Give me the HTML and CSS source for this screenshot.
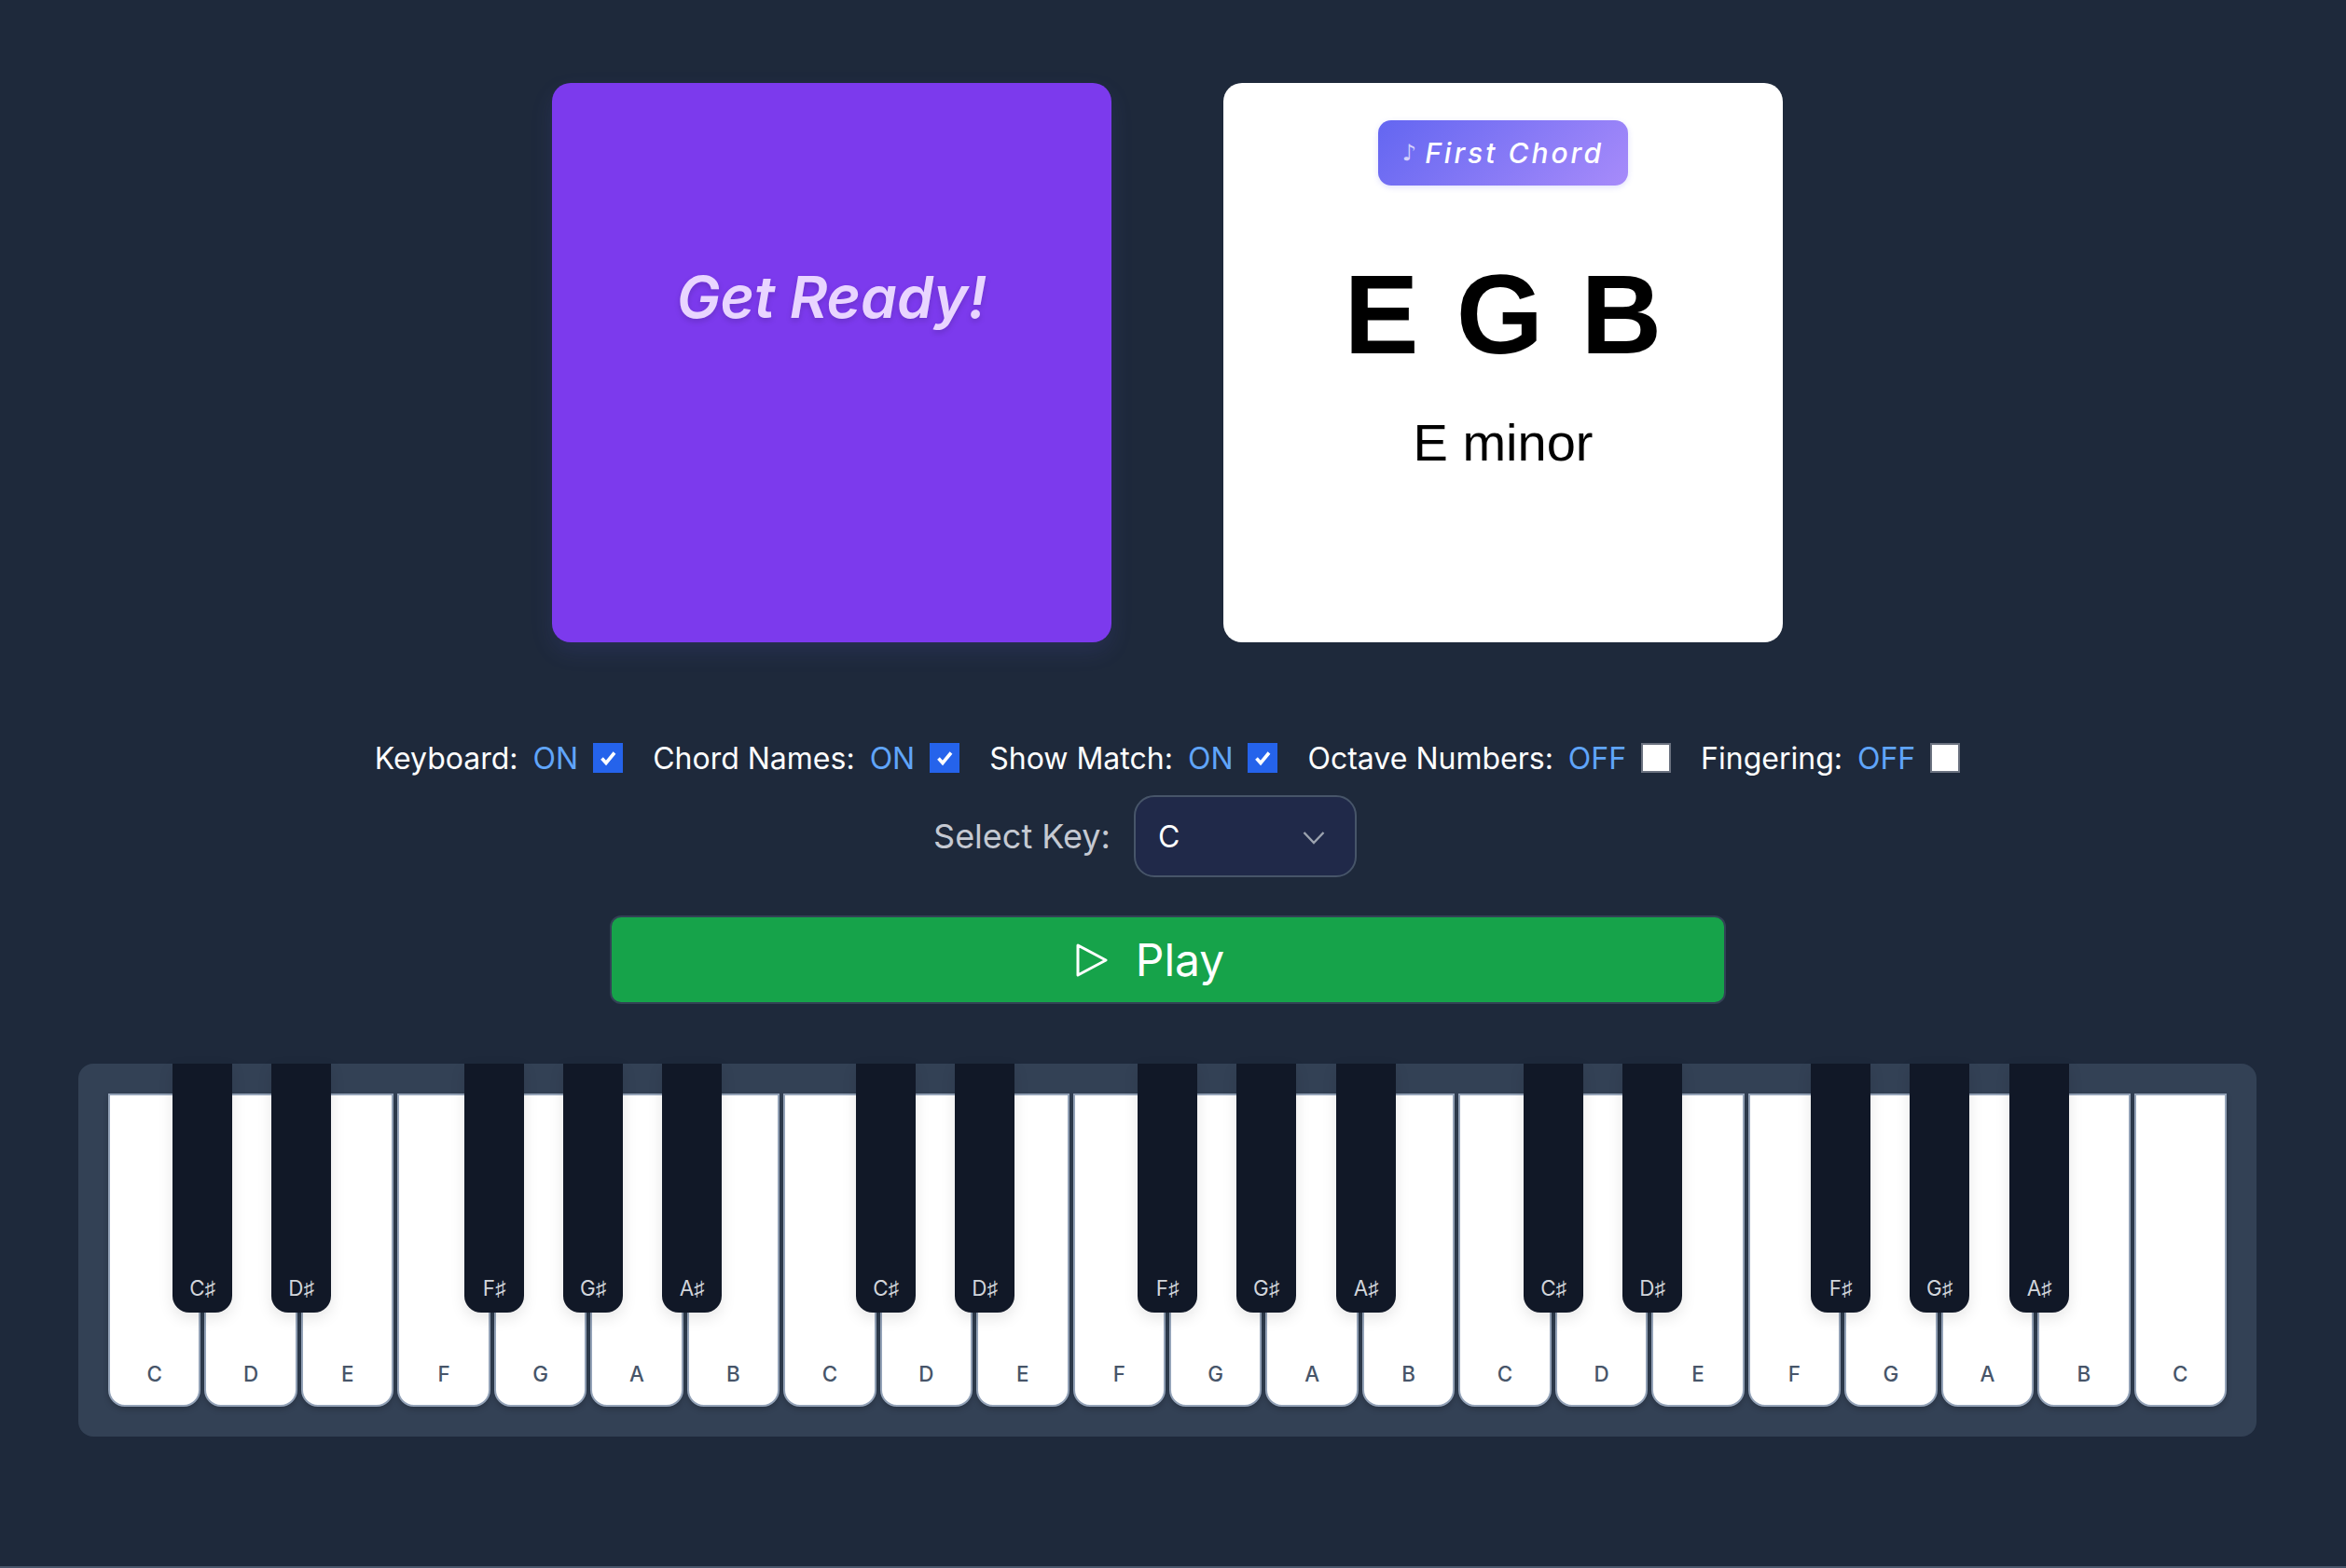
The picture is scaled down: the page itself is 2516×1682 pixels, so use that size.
FILE: index.html
```html
<!DOCTYPE html>
<html lang="en">
<head>
<meta charset="utf-8">
<title>Chord Trainer</title>
<link rel="stylesheet" href="styles.css">
</head>
<body>
<main class="app">
  <section class="cards">
    <div class="card card-purple"><h2 class="ready">Get Ready!</h2></div>
    <div class="card card-white">
      <div class="badge"><span class="note">♪</span> First Chord</div>
      <div class="notes">E G B</div>
      <div class="chord-name">E minor</div>
    </div>
  </section>
  <section class="toggles">
    <label class="toggle"><span>Keyboard:</span><span class="state">ON</span><span class="check on"><svg viewBox="0 0 32 32"><path d="M9.5 16.5l4.5 5 9-11" fill="none" stroke="#fff" stroke-width="3.6"/></svg></span></label>
    <label class="toggle"><span>Chord Names:</span><span class="state">ON</span><span class="check on"><svg viewBox="0 0 32 32"><path d="M9.5 16.5l4.5 5 9-11" fill="none" stroke="#fff" stroke-width="3.6"/></svg></span></label>
    <label class="toggle"><span>Show Match:</span><span class="state">ON</span><span class="check on"><svg viewBox="0 0 32 32"><path d="M9.5 16.5l4.5 5 9-11" fill="none" stroke="#fff" stroke-width="3.6"/></svg></span></label>
    <label class="toggle"><span>Octave Numbers:</span><span class="state">OFF</span><span class="check"></span></label>
    <label class="toggle"><span>Fingering:</span><span class="state">OFF</span><span class="check"></span></label>
  </section>
  <section class="key-select">
    <span class="key-label">Select Key:</span>
    <div class="select"><span>C</span><svg class="chevron" viewBox="0 0 24 24"><path d="M1.5 7l10.5 11 10.5-11" fill="none" stroke="#9ca3af" stroke-width="2.4"/></svg></div>
  </section>
  <button class="play"><svg class="play-icon" viewBox="0 0 34 36"><path d="M2 2l30 16-30 16z" fill="none" stroke="#fff" stroke-width="3" stroke-linejoin="round"/></svg><span>Play</span></button>
  <section class="piano">
    <div class="whites">
      <div class="white">C</div><div class="white">D</div><div class="white">E</div><div class="white">F</div><div class="white">G</div><div class="white">A</div><div class="white">B</div>
      <div class="white">C</div><div class="white">D</div><div class="white">E</div><div class="white">F</div><div class="white">G</div><div class="white">A</div><div class="white">B</div>
      <div class="white">C</div><div class="white">D</div><div class="white">E</div><div class="white">F</div><div class="white">G</div><div class="white">A</div><div class="white">B</div>
      <div class="white">C</div>
    </div>
    <div class="black" style="left:101px">C♯</div>
    <div class="black" style="left:207px">D♯</div>
    <div class="black" style="left:414px">F♯</div>
    <div class="black" style="left:520px">G♯</div>
    <div class="black" style="left:626px">A♯</div>
    <div class="black" style="left:834px">C♯</div>
    <div class="black" style="left:940px">D♯</div>
    <div class="black" style="left:1136px">F♯</div>
    <div class="black" style="left:1242px">G♯</div>
    <div class="black" style="left:1349px">A♯</div>
    <div class="black" style="left:1550px">C♯</div>
    <div class="black" style="left:1656px">D♯</div>
    <div class="black" style="left:1858px">F♯</div>
    <div class="black" style="left:1964px">G♯</div>
    <div class="black" style="left:2071px">A♯</div>
  </section>
</main>
</body>
</html>
```
FILE: styles.css
```css
* { box-sizing: border-box; }
html, body { margin: 0; height: 100%; }
body {
  background: #1e293b;
  font-family: Inter, "Noto Sans", sans-serif;
  color: #fff;
  overflow: hidden;
  border-bottom: 2px solid #475569;
}
.app {
  width: 2504px;
  padding-top: 89px;
  display: flex;
  flex-direction: column;
  align-items: center;
}
.cards { display: flex; gap: 120px; }
.card { width: 600px; height: 600px; border-radius: 20px; }
.card-purple {
  background: #7c3aed;
  box-shadow: 0 10px 24px rgba(99, 102, 241, 0.12);
  display: flex;
  justify-content: center;
  padding-top: 191px;
}
.ready {
  margin: 0;
  font-size: 62.4px;
  line-height: 78px;
  font-weight: 600;
  font-style: italic;
  color: #e9d5ff;
  text-shadow: 0 3px 6px rgba(0, 0, 0, 0.15);
}
.card-white {
  background: #fff;
  color: #000;
  display: flex;
  flex-direction: column;
  align-items: center;
  padding-top: 40px;
}
.badge {
  width: 268px;
  height: 70px;
  border-radius: 14px;
  background: linear-gradient(135deg, #6366f1, #a78bfa);
  color: #fff;
  box-shadow: 0 2px 6px rgba(99, 102, 241, 0.2);
  display: flex;
  align-items: center;
  justify-content: center;
  gap: 9px;
  font-size: 30px;
  font-weight: 500;
  font-style: italic;
  letter-spacing: 3px;
}
.note { font-size: 24px; font-weight: 400; opacity: .7; font-family: "DejaVu Sans", sans-serif; letter-spacing: 0; }
.notes {
  margin-top: 78px;
  padding-left: 3px;
  font-family: "Liberation Sans", Arial, sans-serif;
  font-weight: 700;
  font-size: 120px;
  line-height: 120px;
  letter-spacing: 3.5px;
}
.chord-name {
  margin-top: 46px;
  font-family: "Liberation Sans", Arial, sans-serif;
  font-size: 56px;
  line-height: 64px;
}
.toggles {
  margin-top: 108px;
  display: flex;
  gap: 32px;
  height: 32px;
  align-items: center;
}
.toggle { display: flex; align-items: center; font-size: 32px; }
.state { color: #60a5fa; margin-left: 16px; margin-right: 16px; }
.check {
  width: 32px;
  height: 32px;
  background: #fff;
  border: 2px solid #6b7280;
  display: block;
}
.check.on { background: #2563eb; border: 0; }
.check svg { display: block; width: 32px; height: 32px; }
.key-select {
  margin-top: 24px;
  margin-right: 48px;
  display: flex;
  align-items: center;
  gap: 25px;
}
.key-label { font-size: 36px; color: #c5c9d2; }
.select {
  width: 239px;
  height: 88px;
  border-radius: 22px;
  background: #202949;
  border: 2px solid #475569;
  padding: 0 32px 0 24px;
  display: flex;
  align-items: center;
  justify-content: space-between;
  font-size: 32px;
}
.chevron { width: 24px; height: 24px; margin-top: 2px; }
.play {
  margin-top: 41px;
  width: 1197px;
  height: 95px;
  border-radius: 12px;
  background: #16a34a;
  border: 2px solid #334155;
  color: #fff;
  font-family: inherit;
  font-size: 48px;
  display: flex;
  align-items: center;
  justify-content: center;
  gap: 30px;
  padding: 0 37px 0 0;
}
.play-icon { width: 34px; height: 36px; }
.piano {
  position: relative;
  margin-top: 64px;
  width: 2336px;
  height: 400px;
  padding: 32px;
  background: #334155;
  border-radius: 16px;
}
.whites { display: flex; gap: 4px; height: 336px; }
.white {
  flex: 1;
  background: #fff;
  color: #475569;
  border: 2px solid #94a3b8;
  border-radius: 0 0 18px 18px;
  box-shadow: 0 3px 6px rgba(0, 0, 0, 0.2);
  display: flex;
  align-items: flex-end;
  justify-content: center;
  padding-bottom: 20px;
  font-size: 22.4px;
  font-weight: 500;
}
.black {
  position: absolute;
  top: 0;
  width: 64px;
  height: 267px;
  background: #111827;
  color: #d1d5db;
  border-radius: 0 0 18px 18px;
  box-shadow: 0 6px 16px rgba(0, 0, 0, 0.1);
  display: flex;
  align-items: flex-end;
  justify-content: center;
  padding-bottom: 12px;
  font-size: 22.4px;
  font-weight: 400;
}
```
